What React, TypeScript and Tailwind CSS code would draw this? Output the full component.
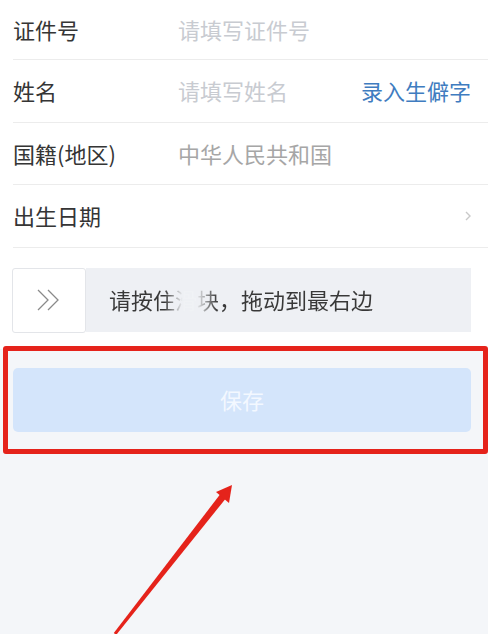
import React from "react";

const font = { fontFamily: '"Noto Sans CJK SC", "Noto Sans", sans-serif' };

function Row({
  label,
  children,
  first,
}: {
  label: string;
  children?: React.ReactNode;
  first?: boolean;
}) {
  return (
    <div
      className={`flex items-center border-b border-[#ececec] pr-[17px] ${
        first ? "h-[61px]" : "h-[62.5px]"
      }`}
    >
      <div className="w-[165px] text-[22px] text-[#353535]">{label}</div>
      <div className="flex flex-1 items-center text-[22px]">{children}</div>
    </div>
  );
}

export default function App() {
  return (
    <div
      className="relative h-[634px] w-full overflow-hidden bg-[#f4f6f9]"
      style={font}
    >
      <div className="bg-white">
        <div className="-mt-[1px] pl-[13px]">
          <Row label="证件号" first>
            <span className="text-[#c8cbd1]">请填写证件号</span>
          </Row>
          <Row label="姓名">
            <span className="text-[#c8cbd1]">请填写姓名</span>
            <span className="ml-auto text-[#3f7cc0]">录入生僻字</span>
          </Row>
          <Row label="国籍(地区)">
            <span className="text-[#a6a6a6]">中华人民共和国</span>
          </Row>
          <Row label="出生日期">
            <span className="ml-auto">
              <svg width="8" height="12" viewBox="0 0 8 12" className="-mr-[1px]">
                <path
                  d="M2 2 L6 6 L2 10"
                  fill="none"
                  stroke="#c9c9c9"
                  strokeWidth="1.4"
                />
              </svg>
            </span>
          </Row>
        </div>
        <div className="pt-[20px] pb-[16px] pl-[12px] pr-[17px]">
          <div className="flex h-[65px]">
            <div className="flex w-[74px] items-center justify-center rounded-[3px] border border-[#e3e5e9] bg-white">
              <svg width="26" height="22" viewBox="0 0 26 22">
                <path
                  d="M2 1 L12 11 L2 21 M12 1 L22 11 L12 21"
                  fill="none"
                  stroke="#8a8a8a"
                  strokeWidth="1.3"
                />
              </svg>
            </div>
            <div className="flex h-[64px] flex-1 items-center bg-[#eef0f4] pl-[23px]">
              <span className="bg-[linear-gradient(90deg,#383838_0%,#383838_21%,#f0f2f5_28%,#f0f2f5_33%,#383838_41%,#383838_100%)] bg-clip-text text-[22px] text-transparent">
                请按住滑块，拖动到最右边
              </span>
            </div>
          </div>
        </div>
      </div>

      <div className="ml-[13px] mr-[17px] mt-[19px] flex h-[64px] items-center justify-center rounded-[5px] bg-[#d4e5fb] text-[22px] text-[#f3f8ff]">
        保存
      </div>

      <div className="pointer-events-none absolute left-[3px] top-[346px] h-[108px] w-[485px] rounded-[3px] border-[5px] border-[#e5231b]" />

      <svg
        className="pointer-events-none absolute left-0 top-0"
        width="488"
        height="634"
        viewBox="0 0 488 634"
      >
        <polygon
          points="113.8,633.1 116.2,634.9 226.8,497.2 221.3,492.8"
          fill="#e5231b"
        />
        <polygon points="232,485 216,492 229,503" fill="#e5231b" />
      </svg>
    </div>
  );
}
